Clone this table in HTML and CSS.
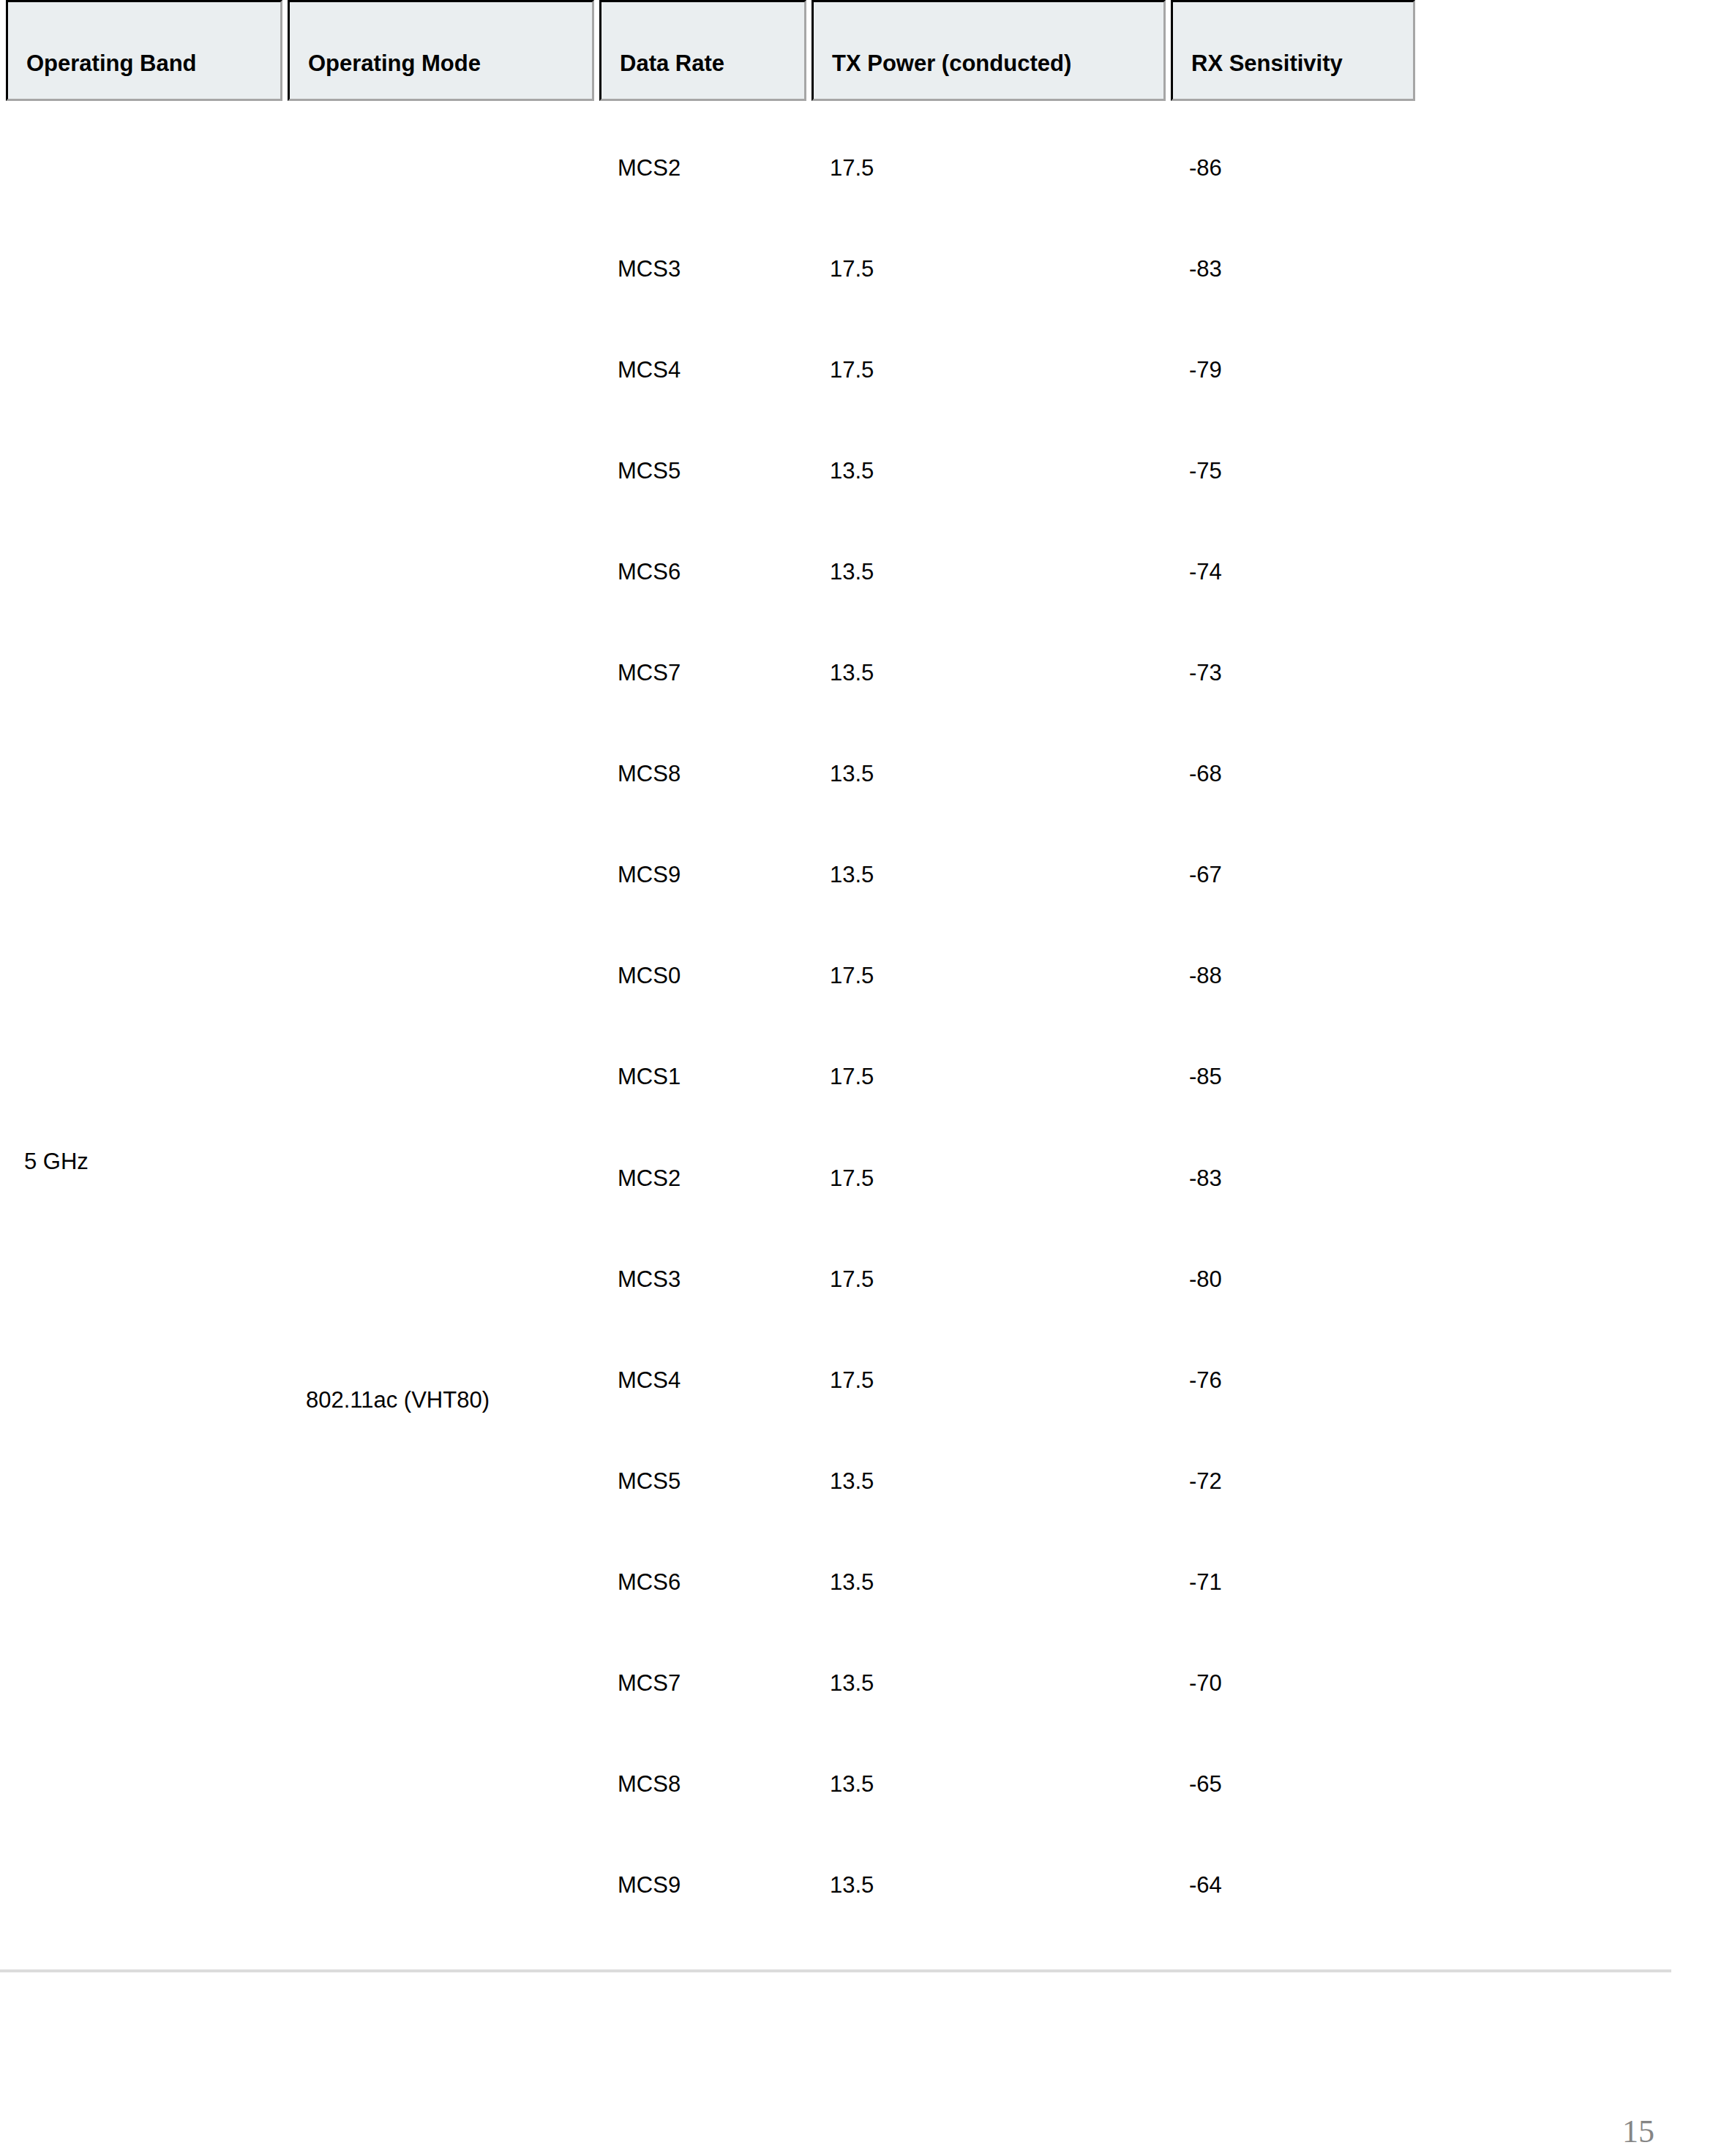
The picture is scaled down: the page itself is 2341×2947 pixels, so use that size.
FILE: index.html
```html
<!DOCTYPE html>
<html lang="en">
<head>
<meta charset="utf-8">
<title>Operating Band Table</title>
<link rel="stylesheet" href="styles.css">
</head>
<body>
<div class="page">
  <table class="spec">
    <colgroup>
      <col class="c-band">
      <col class="c-mode">
      <col class="c-rate">
      <col class="c-tx">
      <col class="c-rx">
    </colgroup>
    <thead>
      <tr>
        <th>Operating Band</th>
        <th>Operating Mode</th>
        <th>Data Rate</th>
        <th>TX Power (conducted)</th>
        <th>RX Sensitivity</th>
      </tr>
    </thead>
    <tbody>
      <tr>
        <td class="band" rowspan="18">5 GHz</td>
        <td class="mode" rowspan="8"></td>
        <td>MCS2</td><td>17.5</td><td>-86</td>
      </tr>
      <tr><td>MCS3</td><td>17.5</td><td>-83</td></tr>
      <tr><td>MCS4</td><td>17.5</td><td>-79</td></tr>
      <tr><td>MCS5</td><td>13.5</td><td>-75</td></tr>
      <tr><td>MCS6</td><td>13.5</td><td>-74</td></tr>
      <tr><td>MCS7</td><td>13.5</td><td>-73</td></tr>
      <tr><td>MCS8</td><td>13.5</td><td>-68</td></tr>
      <tr><td>MCS9</td><td>13.5</td><td>-67</td></tr>
      <tr>
        <td class="mode vht80" rowspan="10">802.11ac (VHT80)</td>
        <td>MCS0</td><td>17.5</td><td>-88</td>
      </tr>
      <tr><td>MCS1</td><td>17.5</td><td>-85</td></tr>
      <tr><td>MCS2</td><td>17.5</td><td>-83</td></tr>
      <tr><td>MCS3</td><td>17.5</td><td>-80</td></tr>
      <tr><td>MCS4</td><td>17.5</td><td>-76</td></tr>
      <tr><td>MCS5</td><td>13.5</td><td>-72</td></tr>
      <tr><td>MCS6</td><td>13.5</td><td>-71</td></tr>
      <tr><td>MCS7</td><td>13.5</td><td>-70</td></tr>
      <tr><td>MCS8</td><td>13.5</td><td>-65</td></tr>
      <tr><td>MCS9</td><td>13.5</td><td>-64</td></tr>
    </tbody>
  </table>
  <div class="rule"></div>
  <div class="footer"><span class="pagenum">15</span></div>
</div>
</body>
</html>
```

FILE: styles.css
```css
html, body {
  margin: 0;
  padding: 0;
  background: #ffffff;
}

.page {
  width: 2341px;
  font-family: "Liberation Sans", Arial, sans-serif;
  font-size: 31px;
  color: #000000;
}

.spec {
  table-layout: fixed;
  border-collapse: separate;
  border-spacing: 7px 0;
  margin-left: 1px;
  width: 1940px;
}

.c-band { width: 378px; }
.c-mode { width: 419px; }
.c-rate { width: 283px; }
.c-tx   { width: 484px; }
.c-rx   { width: 334px; }

.spec th {
  box-sizing: border-box;
  background: #eaeef0;
  border-style: solid;
  border-width: 3px;
  border-color: #000000 #a6a6a6 #a6a6a6 #000000;
  padding: 66px 25px 30px 25px;
  line-height: 36px;
  font-weight: bold;
  text-align: left;
  vertical-align: top;
  white-space: nowrap;
}

.spec td {
  box-sizing: border-box;
  padding: 73.5px 25px 28.62px 25px;
  line-height: 36px;
  text-align: left;
  vertical-align: top;
  white-space: nowrap;
}

.spec td.band {
  padding-top: 1432px;
  padding-bottom: 0;
}

.spec td.mode {
  padding-top: 0;
  padding-bottom: 0;
}

.spec td.vht80 {
  padding-top: 653px;
}

.rule {
  width: 2284px;
  height: 4px;
  background: #dcdcdc;
  margin-top: 68px;
}

.footer {
  width: 2284px;
  display: flex;
  justify-content: flex-end;
  margin-top: 193px;
  padding-right: 23px;
  box-sizing: border-box;
}

.pagenum {
  font-family: "Liberation Serif", "Times New Roman", serif;
  font-size: 44px;
  line-height: 50px;
  color: #858585;
}
```
